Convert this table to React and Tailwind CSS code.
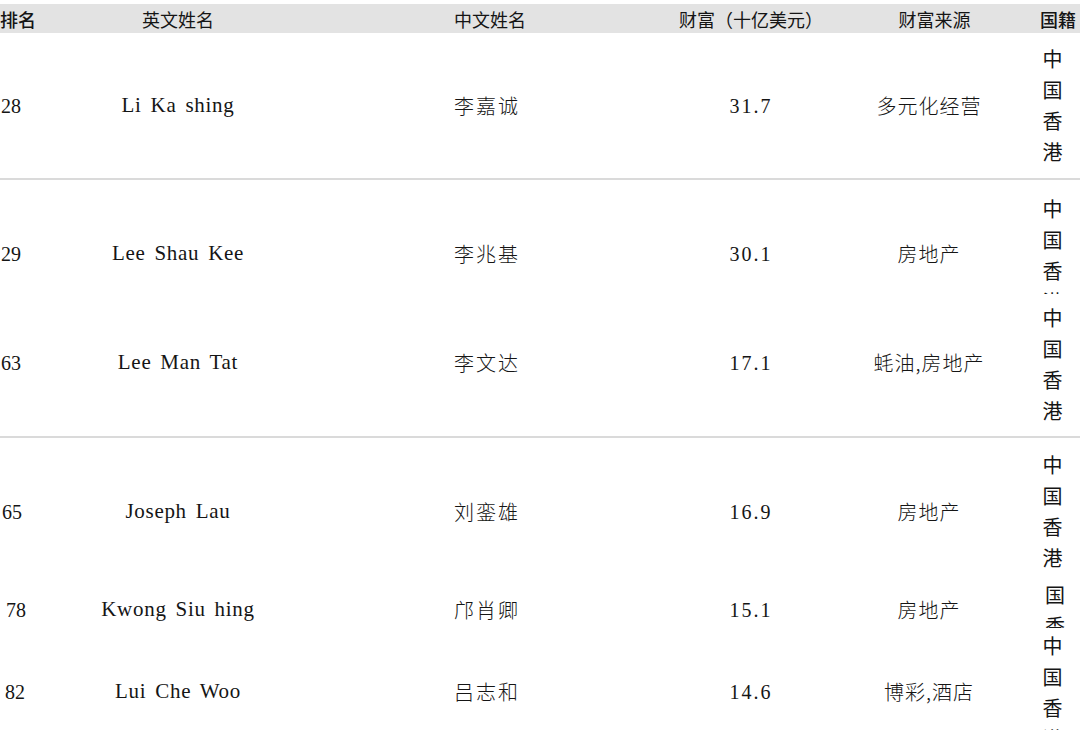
import React from "react";

const F = "font-['Liberation_Serif','Noto_Sans_CJK_SC',serif]";

function Stack({ chars }) {
  return (
    <div className="flex flex-col items-center">
      {chars.map((c, i) => (
        <div key={i} className="h-[31px] text-[20px] leading-[31px] text-[#151515] font-['Noto_Sans_CJK_SC',sans-serif]">
          {c}
        </div>
      ))}
    </div>
  );
}

const HK = ["中", "国", "香", "港"];

function Row({ rank, en, cn, w, src, h, rankCls = "" }) {
  return (
    <div className={`grid shrink-0 grid-cols-[60px_236px_382px_146px_210px] items-center ${h}`}>
      <div className={`pl-[1px] text-[20px] ${rankCls}`}>{rank}</div>
      <div className="text-center text-[21px] tracking-[0.7px] [word-spacing:3px]">{en}</div>
      <div className="text-center text-[20px] tracking-[2px] font-['Noto_Sans_CJK_SC',sans-serif] font-light">{cn}</div>
      <div className="text-center text-[20px] tracking-[2px]">{w}</div>
      <div className="text-center text-[20px] tracking-[1px] font-['Noto_Sans_CJK_SC',sans-serif] font-light">{src}</div>
    </div>
  );
}

export default function App() {
  return (
    <div className={`w-[1080px] h-[730px] overflow-hidden bg-white text-[#151515] ${F}`}>
      {/* header */}
      <div className="mt-[4px] h-[29px] bg-[#e3e3e3] flex items-center text-[18px] leading-none font-['Noto_Sans_CJK_SC',sans-serif]">
        <div className="grid grid-cols-[60px_236px_382px_146px_210px] w-[1034px] items-center">
          <div className="font-medium">排名</div>
          <div className="text-center">英文姓名</div>
          <div className="text-center pl-[6px]">中文姓名</div>
          <div className="text-center whitespace-nowrap">财富（十亿美元）</div>
          <div className="text-center pl-[11px]">财富来源</div>
        </div>
        <div className="w-[46px] pl-[6px] whitespace-nowrap font-medium">国籍</div>
      </div>

      {/* band 1 */}
      <div className="flex h-[145px]">
        <div className="w-[1034px] flex flex-col">
          <Row rank="28" en="Li Ka shing" cn="李嘉诚" w="31.7" src="多元化经营" h="h-[145px]" />
        </div>
        <div className="w-[46px] pr-[9px] overflow-hidden">
          <div className="h-[145px] pt-[9.5px] overflow-hidden">
            <Stack chars={HK} />
          </div>
        </div>
      </div>

      <div className="h-[2px] bg-[#dadada]" />

      {/* band 2 */}
      <div className="flex h-[256px]">
        <div className="w-[1034px] flex flex-col">
          <Row rank="29" en="Lee Shau Kee" cn="李兆基" w="30.1" src="房地产" h="h-[148px]" />
          <Row rank="63" en="Lee Man Tat" cn="李文达" w="17.1" src="蚝油,房地产" h="h-[70px]" />
        </div>
        <div className="w-[46px] pr-[9px] flex flex-col">
          <div className="h-[114px] shrink-0 pt-[12.5px] overflow-hidden">
            <Stack chars={HK} />
          </div>
          <div className="h-[142px] shrink-0 pt-[7.5px] overflow-hidden">
            <Stack chars={HK} />
          </div>
        </div>
      </div>

      <div className="h-[2px] bg-[#dadada]" />

      {/* band 3 */}
      <div className="flex h-[300px] overflow-hidden">
        <div className="w-[1034px] flex flex-col">
          <Row rank="65" en="Joseph Lau" cn="刘銮雄" w="16.9" src="房地产" h="h-[148px]" rankCls="pl-[2px]" />
          <Row rank="78" en="Kwong Siu hing" cn="邝肖卿" w="15.1" src="房地产" h="h-[48px]" rankCls="pl-[6px]" />
          <Row rank="82" en="Lui Che Woo" cn="吕志和" w="14.6" src="博彩,酒店" h="h-[116px]" rankCls="pl-[5px]" />
        </div>
        <div className="w-[46px] flex flex-col">
          <div className="h-[137px] shrink-0 pt-[10.5px] pr-[9px] overflow-hidden">
            <Stack chars={HK} />
          </div>
          <div className="h-[53px] shrink-0 pt-[3.5px] pr-[4px] overflow-hidden">
            <Stack chars={["国", "香"]} />
          </div>
          <div className="h-[110px] shrink-0 pt-[1.5px] pr-[9px] overflow-hidden">
            <Stack chars={HK} />
          </div>
        </div>
      </div>
    </div>
  );
}
